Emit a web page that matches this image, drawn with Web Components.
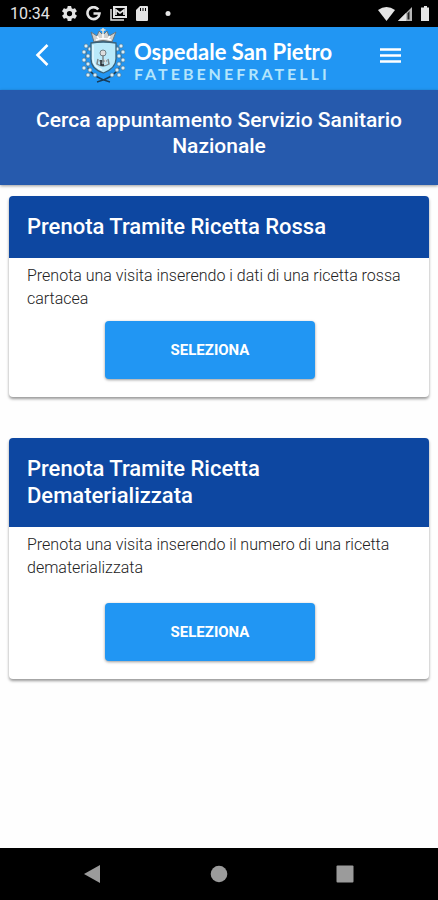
<!DOCTYPE html>
<html lang="it">
<head>
<meta charset="utf-8">
<meta name="viewport" content="width=device-width, initial-scale=1">
<title>Ospedale San Pietro</title>
<style>
    body {
        margin: 0;
        background: #fefefe;
        color: #222;
        font-family: Roboto, "Liberation Sans", sans-serif;
        --primary: #2196f3;
        --primary-dark: #0d47a1;
        --banner: #265aad;
    }
</style>
</head>
<body>
<booking-app>
    <status-bar slot="top" time="10:34"></status-bar>
    <app-header slot="top">
        <hospital-logo>
            Ospedale San Pietro
            <span slot="order">FATEBENEFRATELLI</span>
        </hospital-logo>
    </app-header>
    <page-banner slot="top">Cerca appuntamento Servizio Sanitario Nazionale</page-banner>
    <booking-card>
        <span slot="title">Prenota Tramite Ricetta Rossa</span>
        Prenota una visita inserendo i dati di una ricetta rossa cartacea
    </booking-card>
    <booking-card spaced>
        <span slot="title">Prenota Tramite Ricetta Dematerializzata</span>
        Prenota una visita inserendo il numero di una ricetta dematerializzata
    </booking-card>
    <system-nav slot="bottom"></system-nav>
</booking-app>

<script>
// Shared base: clones the class template into an open shadow root
class BaseElement extends HTMLElement {
    constructor() {
        super();
        const template = document.createElement('template');
        template.innerHTML = this.constructor.markup;
        this.attachShadow({ mode: 'open' });
        this.shadowRoot.appendChild(template.content.cloneNode(true));
    }
}

class BookingApp extends BaseElement {
    static markup = `
        <style>
            :host {
                display: flex;
                flex-direction: column;
                min-height: 100vh;
            }
            main {
                flex: 1;
                display: flex;
                flex-direction: column;
                gap: 41px;
                padding: 11px 9px 40px;
            }
        </style>
        <slot name="top"></slot>
        <main><slot></slot></main>
        <slot name="bottom"></slot>
    `;
}

class StatusBar extends BaseElement {
    static markup = `
        <style>
            :host {
                display: flex;
                align-items: center;
                justify-content: space-between;
                height: 27px;
                padding: 0 8px 0 10px;
                background: #000;
                color: #e4e4e4;
                font-size: 16px;
                line-height: 27px;
            }
            div {
                display: flex;
                align-items: center;
            }
            .left { gap: 9px; }
            .left time { margin-right: 3px; }
            .right { gap: 3px; }
            svg {
                display: block;
                fill: currentColor;
            }
        </style>
        <div class="left">
            <time></time>
            <svg width="15" height="15" viewBox="2 2 20 20"><path d="M19.4 13a7.500 7.500 0 0 0 0-2l2.100-1.600a.5.5 0 0 0 .1-.7l-2-3.400a.5.5 0 0 0-.6-.2l-2.500 1a7.300 7.300 0 0 0-1.700-1l-.4-2.600a.5.5 0 0 0-.5-.5h-4a.5.5 0 0 0-.5.5L9 5.100a7.700 7.700 0 0 0-1.700 1l-2.500-1a.5.5 0 0 0-.6.2l-2 3.400a.5.5 0 0 0 .1.700L4.500 11a7.900 7.900 0 0 0 0 2l-2.100 1.600a.5.5 0 0 0-.1.700l2 3.400c.1.200.4.300.6.200l2.500-1a7.300 7.300 0 0 0 1.700 1l.4 2.600c0 .3.200.5.500.5h4c.3 0 .5-.2.5-.5l.4-2.600a7.700 7.700 0 0 0 1.700-1l2.500 1c.2.100.5 0 .6-.2l2-3.400a.5.5 0 0 0-.1-.7zM12 15.500a3.500 3.500 0 1 1 0-7 3.500 3.500 0 0 1 0 7z" fill-rule="evenodd"/></svg>
            <svg width="15" height="15" viewBox="0 0 15 15"><path d="M12.300 3.500A6 6 0 1 0 13.500 7.500H7.500" fill="none" stroke="currentColor" stroke-width="2.600"/></svg>
            <svg width="17" height="15" viewBox="0 0 17 15"><path d="M1 3v11h13" fill="none" stroke="currentColor" stroke-width="1.500"/><path d="M3 0h14v12H3zM5 2v8h10V2z" fill-rule="evenodd"/><path d="M6 9V4l4 3 4-3v5" fill="none" stroke="currentColor" stroke-width="1.700"/></svg>
            <svg width="12" height="15" viewBox="0 0 12 15"><path fill-rule="evenodd" d="M4 0h7q1 0 1 1v13q0 1-1 1H1q-1 0-1-1V4zM4 2v3h1V2zM6.500 2v3h1V2zM9 2v3h1V2z"/></svg>
            <svg width="21" height="15" viewBox="0 0 21 15"><circle cx="11" cy="7.500" r="2.500"/></svg>
        </div>
        <div class="right">
            <svg width="17" height="14" viewBox="0 0 17 14"><path d="M0 3Q8.500-3 17 3L8.500 14z"/></svg>
            <svg width="14" height="14" viewBox="0 0 14 14"><path d="M14 0v14H0z" opacity=".8"/><path d="M8 6v8H0z"/><path d="M9.500 6.500 11.500 4v8.500h-2z" fill="#222"/></svg>
            <svg width="15" height="15" viewBox="0 0 15 15"><path d="M7 1.500h2V0h3v1.500h2V15H6V1.500z"/></svg>
        </div>
    `;

    connectedCallback() {
        this.shadowRoot.querySelector('time').innerText = this.getAttribute('time');
    }
}

class AppHeader extends BaseElement {
    static markup = `
        <style>
            :host {
                display: flex;
                align-items: center;
                height: 63px;
                padding: 0 32px 0 26px;
                background: var(--primary);
                color: #fff;
            }
            button {
                display: flex;
                align-items: center;
                justify-content: center;
                width: 32px;
                height: 40px;
                margin-bottom: 7px;
                padding: 0;
                border: none;
                background: none;
                color: inherit;
                cursor: pointer;
            }
            svg {
                fill: none;
                stroke: currentColor;
            }
            slot {
                display: block;
                flex: 1;
                padding-left: 24px;
            }
        </style>
        <button type="button" aria-label="Indietro">
            <svg width="14" height="22" viewBox="0 0 14 22" stroke-width="2.600"><path d="M12.500 1 2.500 11l10 10"/></svg>
        </button>
        <slot></slot>
        <button type="button" aria-label="Menu">
            <svg width="21" height="15" viewBox="0 0 21 15" stroke-width="2.600"><path d="M0 1.500h21M0 7.500h21M0 13.500h21"/></svg>
        </button>
    `;
}

class HospitalLogo extends BaseElement {
    static markup = `
        <style>
            :host {
                display: flex;
                align-items: center;
                gap: 9px;
                height: 63px;
                white-space: nowrap;
            }
            svg {
                flex: none;
                margin-bottom: 6px;
            }
            .text {
                padding-top: 4px;
            }
            .name {
                font: 700 22px/26px Lato, "Open Sans", sans-serif;
            }
            .order {
                color: #b3e5fc;
                font: 700 16px/18px Lato, "Open Sans", sans-serif;
                letter-spacing: 3px;
            }
        </style>
        <svg width="43" height="56" viewBox="0 0 43 56" fill="none">
            <!-- crown -->
            <path d="M12 14 9 4l6 4 2-5 4 4 4-4 2 5 7-4-4 10q-9-3-18 0z" fill="#cfd0cf" stroke="#69777f"/>
            <path d="M21 7V0M18.500 2h5" stroke="#ece5d5" stroke-width="1.500"/>
            <path d="M14 12q7-3 15 0M15 8l2 3M21 6v4M28 8l-2 3" stroke="#fff" stroke-width="1.500"/>
            <path d="M13 14q8-2 17 0" stroke="#806f60"/>
            <!-- laurel branches -->
            <path d="M6 40q6 10 22 14M37 40q-6 10-22 14" stroke="#183c58" stroke-width="1.500"/>
            <path d="M8 17Q0 30 6 40M35 17q8 13 2 23" stroke="#3a78a5"/>
            <g fill="#d9edf6" stroke="#48708a" stroke-width=".6">
                <circle cx="4" cy="18" r="2"/><circle cx="8" cy="21" r="2"/>
                <circle cx="2" cy="24" r="2"/><circle cx="6" cy="28" r="2"/>
                <circle cx="2" cy="32" r="2"/><circle cx="6" cy="36" r="2"/>
                <circle cx="2" cy="40" r="2"/><circle cx="8" cy="42" r="2"/>
                <circle cx="6" cy="47" r="2"/><circle cx="13" cy="47" r="2"/>
                <circle cx="39" cy="18" r="2"/><circle cx="35" cy="21" r="2"/>
                <circle cx="41" cy="24" r="2"/><circle cx="37" cy="28" r="2"/>
                <circle cx="41" cy="32" r="2"/><circle cx="37" cy="36" r="2"/>
                <circle cx="41" cy="40" r="2"/><circle cx="35" cy="42" r="2"/>
                <circle cx="37" cy="47" r="2"/><circle cx="30" cy="47" r="2"/>
            </g>
            <!-- shield -->
            <path d="M9 15q12-2 25 0v16q0 9-12.500 14Q9 41 9 31z" fill="#b9e9fa" stroke="#38617a" stroke-width="1.300"/>
            <path d="M11 17v14q0 7 9 11" stroke="#e5f8ff" stroke-width="1.500"/>
            <circle cx="21" cy="25" r="3" fill="#ddd" stroke="#708087"/>
            <path d="M21 27v10M16 31l-1 5q6 4 12 0l-1-5M17 33h8" stroke="#7c868a" stroke-width="1.500"/>
            <path d="m18 33 2 4M23 31l1 5" stroke="#ddd" stroke-width="1.500"/>
            <path d="M19 32v5h3" stroke="#182027" stroke-width="1.500"/>
        </svg>
        <div class="text">
            <div class="name"><slot></slot></div>
            <div class="order"><slot name="order"></slot></div>
        </div>
    `;
}

class PageBanner extends BaseElement {
    static markup = `
        <style>
            :host {
                display: block;
                padding: 17px 24px 26px;
                background: var(--banner);
                box-shadow: 0 1px 3px rgba(0,0,0,0.4);
                color: #fff;
                text-align: center;
            }
            h1 {
                margin: 0;
                font-size: 21px;
                font-weight: 500;
                line-height: 26px;
            }
        </style>
        <h1><slot></slot></h1>
    `;
}

class BookingCard extends BaseElement {
    static markup = `
        <style>
            :host {
                display: block;
                overflow: hidden;
                border-radius: 4px;
                background: #fff;
                box-shadow: 0 2px 3px rgba(0,0,0,0.4);
            }
            h2 {
                margin: 0;
                padding: 17px 18px 18px;
                background: var(--primary-dark);
                color: #fff;
                font-size: 22px;
                font-weight: 500;
                line-height: 27px;
            }
            p {
                margin: 0;
                padding: 6px 18px 11px;
                font-size: 16px;
                font-weight: 300;
                line-height: 23px;
            }
            :host([spaced]) p {
                padding-bottom: 24px;
            }
            .actions {
                display: flex;
                justify-content: center;
                padding: 0 18px 18px 0;
            }
            button {
                width: 210px;
                height: 58px;
                border: none;
                border-radius: 4px;
                background: var(--primary);
                box-shadow: 0 1px 3px rgba(0,0,0,0.4);
                color: #fff;
                font: 700 15px/20px Roboto, "Liberation Sans", sans-serif;
                text-transform: uppercase;
                cursor: pointer;
            }
        </style>
        <h2><slot name="title"></slot></h2>
        <p><slot></slot></p>
        <div class="actions"><button type="button">Seleziona</button></div>
    `;
}

class SystemNav extends BaseElement {
    static markup = `
        <style>
            :host {
                display: flex;
                justify-content: center;
                gap: 90px;
                height: 52px;
                background: #000;
            }
            button {
                display: flex;
                align-items: center;
                justify-content: center;
                width: 36px;
                padding: 0;
                border: none;
                background: none;
                cursor: pointer;
            }
            svg { fill: #9b9b9b; }
        </style>
        <button type="button" aria-label="Indietro"><svg width="18" height="18" viewBox="0 0 18 18"><path d="M16 0v18L0 9z"/></svg></button>
        <button type="button" aria-label="Home"><svg width="18" height="18" viewBox="0 0 18 18"><circle cx="9" cy="9" r="8.300"/></svg></button>
        <button type="button" aria-label="App recenti"><svg width="18" height="18" viewBox="0 0 18 18"><rect width="17" height="17" x="0.500" y="0.500" rx="1"/></svg></button>
    `;
}

customElements.define('booking-app', BookingApp);
customElements.define('status-bar', StatusBar);
customElements.define('app-header', AppHeader);
customElements.define('hospital-logo', HospitalLogo);
customElements.define('page-banner', PageBanner);
customElements.define('booking-card', BookingCard);
customElements.define('system-nav', SystemNav);
</script>
</body>
</html>
